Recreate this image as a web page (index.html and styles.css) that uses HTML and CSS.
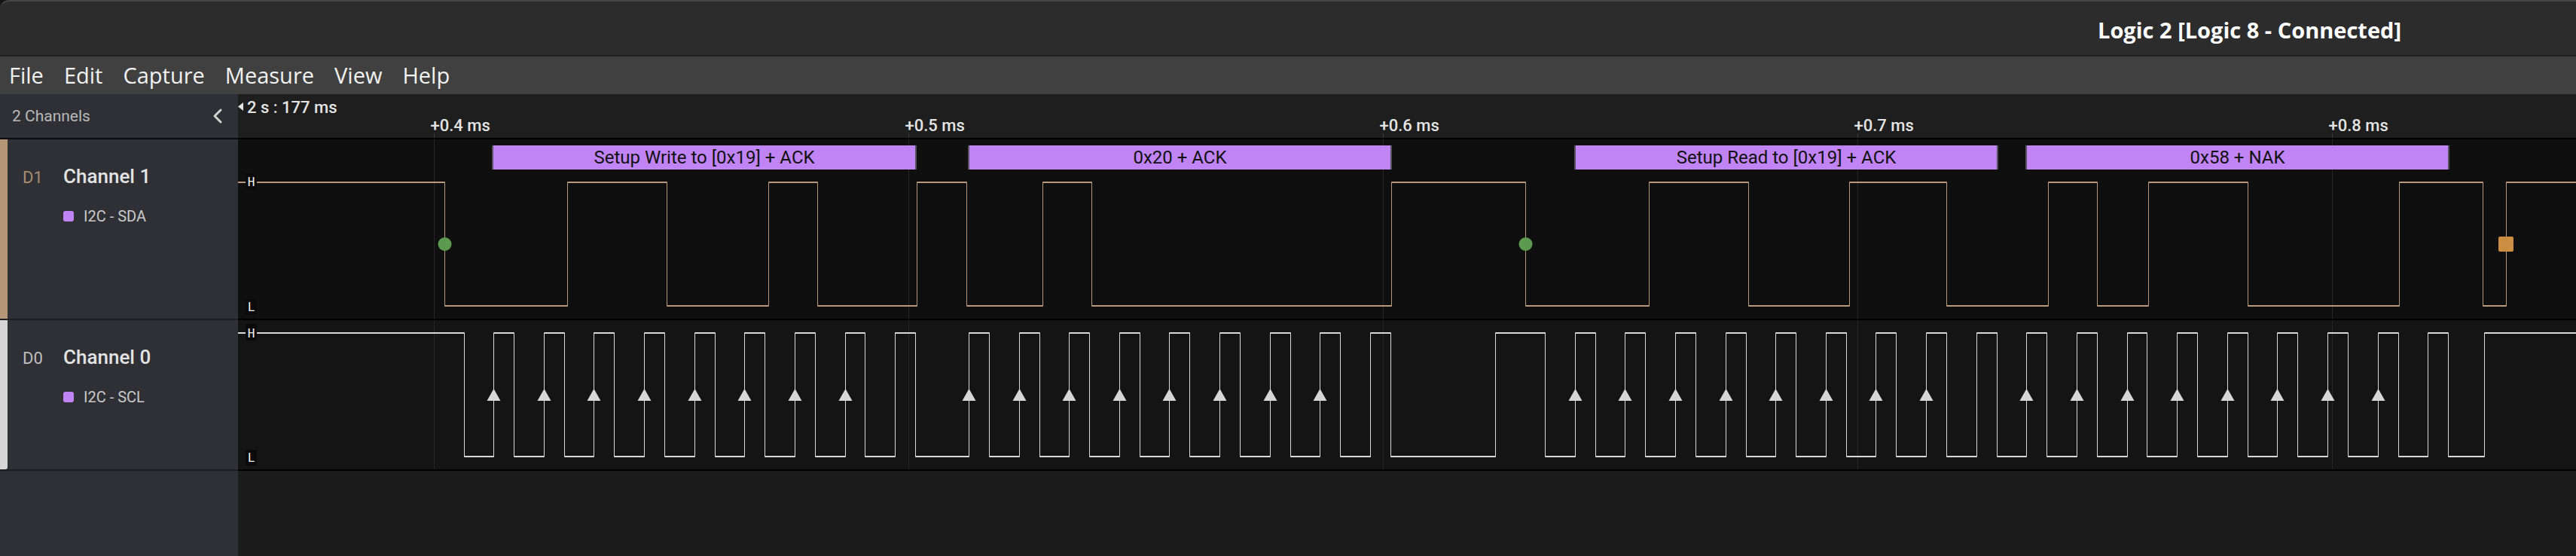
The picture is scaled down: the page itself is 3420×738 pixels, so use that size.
FILE: index.html
```html
<!DOCTYPE html>
<html lang="en">
<head>
<meta charset="utf-8">
<title>Logic 2</title>
<link rel="stylesheet" href="styles.css">
</head>
<body>
<div class="app">
  <header class="titlebar"><span class="title">Logic 2 [Logic 8 - Connected]</span></header>
  <nav class="menubar">
    <span>File</span><span>Edit</span><span>Capture</span><span>Measure</span><span>View</span><span>Help</span>
  </nav>
  <div class="main">
    <aside class="sidebar">
      <div class="side-head">
        <span>2 Channels</span>
        <svg class="chev" width="16" height="22" viewBox="0 0 16 22"><polyline points="12,3 4,11 12,19" fill="none" stroke="#d2d2d2" stroke-width="3" stroke-linecap="round" stroke-linejoin="round"/></svg>
      </div>
      <div class="chan chan-1">
        <div class="strip strip-1"></div>
        <div class="chan-body">
          <div class="chan-title"><span class="chan-id id-1">D1</span><span class="chan-name">Channel 1</span></div>
          <div class="analyzer"><span class="swatch"></span><span>I2C - SDA</span></div>
        </div>
      </div>
      <div class="chan chan-0">
        <div class="strip strip-0"></div>
        <div class="chan-body">
          <div class="chan-title"><span class="chan-id id-0">D0</span><span class="chan-name">Channel 0</span></div>
          <div class="analyzer"><span class="swatch"></span><span>I2C - SCL</span></div>
        </div>
      </div>
    </aside>
    <section class="timeline">
      <div class="ruler">
        <svg width="3104" height="58" viewBox="0 0 3104 58">
          <polygon points="7,11 7,22 0,16.5" class="tick-fill"/>
          <text x="12" y="24.5" class="tick">2 s : 177 ms</text>
          <path d="M260.5 52V58M890.5 52V58M1520.5 52V58M2150.5 52V58M2780.5 52V58" class="grid-head"/>
          <text x="255.5" y="48.5" class="tick">+0.4 ms</text>
          <text x="885.5" y="48.5" class="tick">+0.5 ms</text>
          <text x="1515.5" y="48.5" class="tick">+0.6 ms</text>
          <text x="2145.5" y="48.5" class="tick">+0.7 ms</text>
          <text x="2775.5" y="48.5" class="tick">+0.8 ms</text>
        </svg>
      </div>
      <div class="row row-1">
        <svg width="3104" height="238" viewBox="0 0 3104 238">
          <path d="M260.5 0V238M890.5 0V238M1520.5 0V238M2150.5 0V238M2780.5 0V238" class="grid"/>
          <g class="bubble">
            <rect x="337" y="8" width="564" height="32" class="bub"/><rect x="337" y="8" width="2" height="32" class="bub-edge"/><rect x="899" y="8" width="2" height="32" class="bub-edge"/>
            <text x="619" y="32" class="bub-text">Setup Write to [0x19] + ACK</text>
          </g>
          <g class="bubble">
            <rect x="969" y="8" width="563" height="32" class="bub"/><rect x="969" y="8" width="2" height="32" class="bub-edge"/><rect x="1530" y="8" width="2" height="32" class="bub-edge"/>
            <text x="1250.5" y="32" class="bub-text">0x20 + ACK</text>
          </g>
          <g class="bubble">
            <rect x="1774" y="8" width="563" height="32" class="bub"/><rect x="1774" y="8" width="2" height="32" class="bub-edge"/><rect x="2335" y="8" width="2" height="32" class="bub-edge"/>
            <text x="2055.5" y="32" class="bub-text">Setup Read to [0x19] + ACK</text>
          </g>
          <g class="bubble">
            <rect x="2373" y="8" width="563" height="32" class="bub"/><rect x="2373" y="8" width="2" height="32" class="bub-edge"/><rect x="2934" y="8" width="2" height="32" class="bub-edge"/>
            <text x="2654.5" y="32" class="bub-text">0x58 + NAK</text>
          </g>
          <path id="sda" class="sig-sda" d="M0 56.5H274.5V220.5H437.5V56.5H569.5V220.5H704.5V56.5H769.5V220.5H901.5V56.5H967.5V220.5H1068.5V56.5H1133.5V220.5H1531.5V56.5H1709.5V220.5H1873.5V56.5H2005.5V220.5H2139.5V56.5H2268.5V220.5H2403.5V56.5H2468.5V220.5H2536.5V56.5H2668.5V220.5H2869.5V56.5H2980.5V220.5H3011.5V56.5H3104"/>
          <use href="#sda" y="1"/>
          <rect x="10" y="45" width="15" height="22" rx="3" class="lvl-box"/>
          <text x="17.5" y="62" class="lvl">H</text>
          <rect x="10" y="212" width="15" height="21" rx="3" class="lvl-box"/>
          <text x="17.5" y="228" class="lvl">L</text>
          <circle cx="274.5" cy="139" r="9" class="start"/>
          <circle cx="1709.5" cy="139" r="9" class="start"/>
          <rect x="3001" y="129" width="20" height="20" rx="2" class="stop"/>
        </svg>
      </div>
      <div class="row row-0">
        <svg width="3104" height="198" viewBox="0 0 3104 198">
          <defs><path id="tri" d="M0 91L9 107H-9Z"/></defs>
          <path d="M260.5 0V198M890.5 0V198M1520.5 0V198M2150.5 0V198M2780.5 0V198" class="grid"/>
          <path id="scl" class="sig-scl" d="M0 16.5H300.5V180.5H339.5V16.5H366.5V180.5H406.5V16.5H433.5V180.5H472.5V16.5H499.5V180.5H539.5V16.5H566.5V180.5H606.5V16.5H633.5V180.5H672.5V16.5H699.5V180.5H739.5V16.5H766.5V180.5H806.5V16.5H832.5V180.5H872.5V16.5H899.5V180.5H970.5V16.5H997.5V180.5H1037.5V16.5H1064.5V180.5H1103.5V16.5H1130.5V180.5H1170.5V16.5H1197.5V180.5H1236.5V16.5H1263.5V180.5H1303.5V16.5H1330.5V180.5H1370.5V16.5H1397.5V180.5H1436.5V16.5H1463.5V180.5H1503.5V16.5H1530.5V180.5H1669.5V16.5H1735.5V180.5H1775.5V16.5H1802.5V180.5H1841.5V16.5H1868.5V180.5H1908.5V16.5H1935.5V180.5H1975.5V16.5H2002.5V180.5H2041.5V16.5H2068.5V180.5H2108.5V16.5H2135.5V180.5H2174.5V16.5H2201.5V180.5H2241.5V16.5H2268.5V180.5H2308.5V16.5H2335.5V180.5H2374.5V16.5H2401.5V180.5H2441.5V16.5H2468.5V180.5H2508.5V16.5H2534.5V180.5H2574.5V16.5H2601.5V180.5H2641.5V16.5H2668.5V180.5H2707.5V16.5H2734.5V180.5H2774.5V16.5H2801.5V180.5H2841.5V16.5H2868.5V180.5H2907.5V16.5H2934.5V180.5H2982.5V16.5H3104"/>
          <use href="#scl" y="1"/>
          <g class="edges">
            <use href="#tri" x="339.5"/><use href="#tri" x="406.5"/><use href="#tri" x="472.5"/><use href="#tri" x="539.5"/>
            <use href="#tri" x="606.5"/><use href="#tri" x="672.5"/><use href="#tri" x="739.5"/><use href="#tri" x="806.5"/>
            <use href="#tri" x="970.5"/><use href="#tri" x="1037.5"/><use href="#tri" x="1103.5"/><use href="#tri" x="1170.5"/>
            <use href="#tri" x="1236.5"/><use href="#tri" x="1303.5"/><use href="#tri" x="1370.5"/><use href="#tri" x="1436.5"/>
            <use href="#tri" x="1775.5"/><use href="#tri" x="1841.5"/><use href="#tri" x="1908.5"/><use href="#tri" x="1975.5"/>
            <use href="#tri" x="2041.5"/><use href="#tri" x="2108.5"/><use href="#tri" x="2174.5"/><use href="#tri" x="2241.5"/>
            <use href="#tri" x="2374.5"/><use href="#tri" x="2441.5"/><use href="#tri" x="2508.5"/><use href="#tri" x="2574.5"/>
            <use href="#tri" x="2641.5"/><use href="#tri" x="2707.5"/><use href="#tri" x="2774.5"/><use href="#tri" x="2841.5"/>
          </g>
          <rect x="10" y="5" width="15" height="22" rx="3" class="lvl-box"/>
          <text x="17.5" y="23" class="lvl">H</text>
          <rect x="10" y="172" width="15" height="21" rx="3" class="lvl-box"/>
          <text x="17.5" y="188" class="lvl">L</text>
        </svg>
      </div>
    </section>
  </div>
</div>
</body>
</html>
```

FILE: styles.css
```css
* { box-sizing: border-box; margin: 0; padding: 0; }
html, body { width: 3420px; height: 738px; overflow: hidden; background: #161616; }
body { font-family: Roboto, "Noto Sans", sans-serif; }

.app { display: flex; flex-direction: column; height: 738px; }

.titlebar {
  height: 75px; flex: none;
  background: #2c2c2c;
  border-top: 2px solid #464646;
  border-bottom: 2px solid #222222;
  border-top-left-radius: 12px;
  display: flex; align-items: center; justify-content: flex-end;
  padding: 4px 232px 0 0;
}
.title { font-family: "Open Sans", sans-serif; font-weight: 700; font-size: 29px; color: #ffffff; }

.menubar {
  height: 50px; flex: none;
  background: #404040;
  display: flex; gap: 27px; padding-left: 12px;
  font-family: "Open Sans", sans-serif; font-size: 29px; line-height: 50px; color: #f2f2f2;
}

.main { flex: 1; display: flex; min-height: 0; }

.sidebar { width: 316px; flex: none; background: #2f3035; display: flex; flex-direction: column; }
.side-head {
  height: 60px; flex: none;
  border-bottom: 2px solid #0b0b0b;
  display: flex; align-items: center; justify-content: space-between;
  padding: 0 19px 0 16px;
  font-size: 21px; color: #b9b9b9;
}
.chev { display: block; }

.chan { display: flex; flex: none; border-bottom: 2px solid #1e1f22; }
.chan-1 { height: 240px; }
.chan-0 { height: 200px; }
.strip { width: 10px; flex: none; }
.strip-1 { background: #b49777; }
.strip-0 { background: #d6d6d6; border-bottom-right-radius: 3px; }
.chan-body { padding: 34px 0 0 20px; }
.chan-title { display: flex; align-items: baseline; }
.chan-id { width: 54px; font-size: 22px; line-height: 30px; }
.id-1 { color: #a58d73; }
.id-0 { color: #bdbdbd; }
.chan-name { font-size: 26px; font-weight: 500; color: #e3e3e3; line-height: 30px; }
.analyzer {
  display: flex; align-items: center; gap: 13px;
  margin: 24px 0 0 54px;
  font-size: 20px; line-height: 24px; color: #cacaca;
}
.swatch { width: 14px; height: 14px; border-radius: 3px; background: #c084f5; }

.timeline { flex: 1; display: flex; flex-direction: column; background: #1c1c1c; min-width: 0; }
.timeline svg { display: block; }
.ruler { height: 60px; flex: none; background: #1e1e1e; border-bottom: 2px solid #000; }
.row { flex: none; border-bottom: 2px solid #000; }
.row-1 { height: 240px; background: #0f0f0f; }
.row-0 { height: 200px; background: #141414; }

.tick { font-family: Roboto, sans-serif; font-weight: 500; font-size: 22px; fill: #e4e4e4; }
.tick-fill { fill: #e4e4e4; }
.grid-head { stroke: #3a3a3a; stroke-width: 1; }
.grid { stroke: #262626; stroke-width: 1; }

.bub { fill: #c084f5; }
.bub-edge { fill: #55525e; }
.bub-text { font-family: Roboto, sans-serif; font-size: 24px; fill: #111111; text-anchor: middle; }

.sig-sda { fill: none; stroke: #b8987a; stroke-width: 1; }
.sig-scl { fill: none; stroke: #d8d8d8; stroke-width: 1; }
.edges { fill: #d6d6d6; }

.lvl-box { fill: #0a0a0a; }
.lvl { font-family: "DejaVu Sans Mono", monospace; font-size: 16px; fill: #f2f2f2; text-anchor: middle; }

.start { fill: #5b9a4f; }
.stop { fill: #cc8e43; }
```
